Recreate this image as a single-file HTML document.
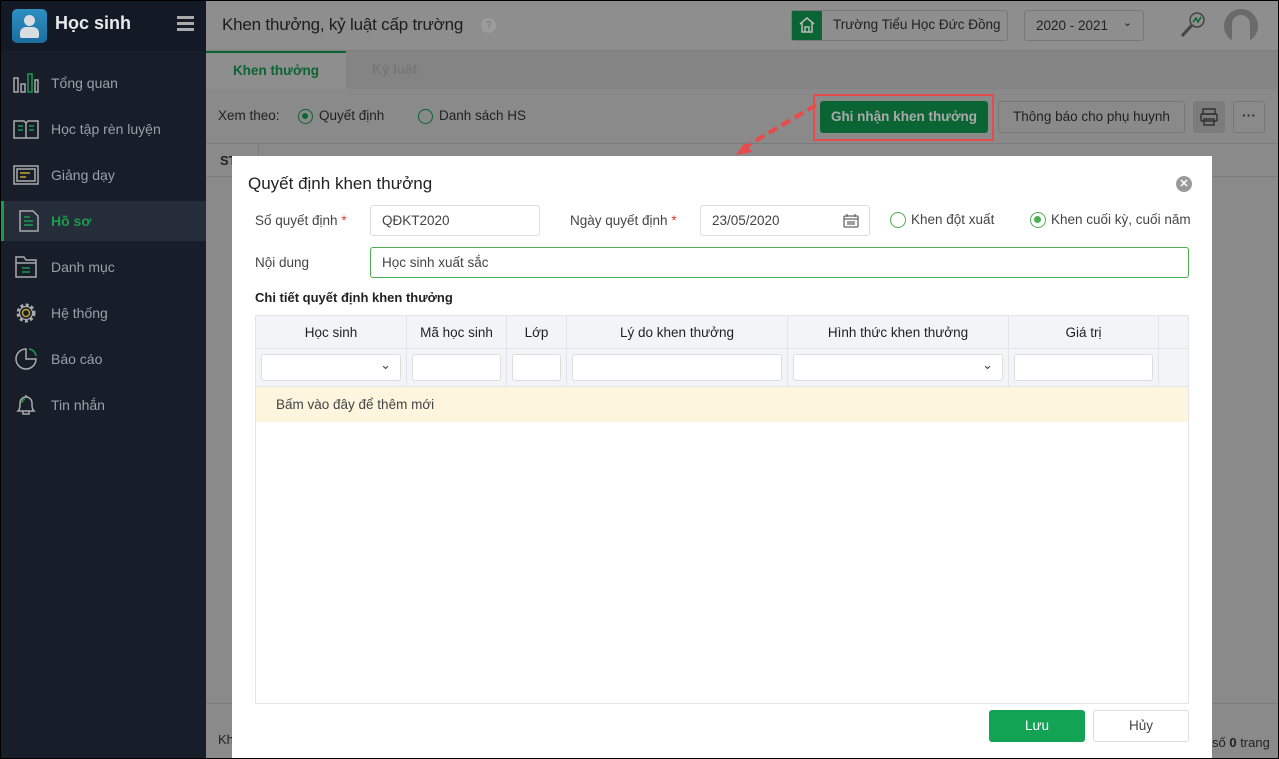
<!DOCTYPE html>
<html><head><meta charset="utf-8"><style>
*{box-sizing:border-box;margin:0;padding:0}
body{width:1279px;height:759px;overflow:hidden;font-family:"Liberation Sans",sans-serif;font-size:13px;color:#333;position:relative;background:#000}
.abs{position:absolute}
#side{left:1px;top:1px;width:205px;height:757px;background:#171e2a}
#main{left:206px;top:1px;width:1072px;height:757px;background:#8a8a8a}
.nav{position:absolute;left:0;width:205px;height:40px;color:#9aa0a8;font-size:14px;line-height:40px;padding-left:50px}
.ico{position:absolute;left:12px;top:9px;width:26px;height:22px}
.modal{left:232px;top:156px;width:980px;height:602px;background:#fff}
.lbl{position:absolute;font-size:13.5px;color:#444}
.inp{position:absolute;border:1px solid #ddd;border-radius:3px;background:#fff;font-size:13.5px;color:#444;padding-left:11px;line-height:29px}
.radio{position:absolute;width:16px;height:16px;border:1.5px solid #4caf50;border-radius:50%}
.th{position:absolute;top:0;height:33px;line-height:33px;text-align:center;font-size:13.5px;color:#222;border-right:1px solid #e3e5ea}
.fc{position:absolute;top:33px;height:38px;border-right:1px solid #e3e5ea}
.fi{position:absolute;top:5px;left:5px;right:5px;height:27px;border:1px solid #ddd;border-radius:3px;background:#fff}
</style></head><body>
<div id="side" class="abs">
 <div class="abs" style="left:0;top:0;width:205px;height:50px;background:#141a25"></div>
 <div class="abs" style="left:11px;top:8px;width:35px;height:34px;border-radius:5px;background:linear-gradient(#2e8fc0,#1a6ea0)">
  <div class="abs" style="left:12px;top:6px;width:11px;height:11px;border-radius:50%;background:#d8dde2"></div>
  <div class="abs" style="left:8px;top:18px;width:19px;height:11px;border-radius:6px 6px 2px 2px;background:#d8dde2"></div></div>
 <div class="abs" style="left:54px;top:12px;color:#e8eaec;font-size:18px;font-weight:bold">Học sinh</div>
 <div class="abs" style="left:176px;top:15px;width:17px;height:3px;background:#aaa;box-shadow:0 6px 0 #aaa,0 12px 0 #aaa"></div>
 <div class="nav" style="top:62px"><svg class="ico" viewBox="0 0 26 22"><g fill="none" stroke="#aaa" stroke-width="1.5"><rect x="1" y="6" width="4" height="14"/><rect x="8" y="12" width="4" height="8"/><rect x="15" y="2" width="4" height="18" stroke="#1e9a4e"/><rect x="22" y="8" width="3" height="12"/></g></svg>Tổng quan</div>
 <div class="nav" style="top:108px"><svg class="ico" viewBox="0 0 26 22"><g fill="none" stroke="#aaa" stroke-width="1.5"><path d="M1 3h10l2 2 2-2h10v17H1z"/><path d="M13 5v15"/><path d="M5 8h5M5 12h5M16 8h5M16 12h5" stroke="#1e9a4e"/></g></svg>Học tập rèn luyện</div>
 <div class="nav" style="top:154px"><svg class="ico" viewBox="0 0 26 22"><g fill="none" stroke="#aaa" stroke-width="1.5"><rect x="1" y="2" width="24" height="18"/><rect x="4" y="5" width="18" height="12"/><path d="M7 9h10M7 13h6" stroke="#c9a227"/></g></svg>Giảng dạy</div>
 <div class="nav" style="top:200px;background:#252d3a;color:#1e9a4e;font-weight:bold;border-left:3px solid #1e9a4e;padding-left:47px"><svg class="ico" viewBox="0 0 26 22" style="left:12px"><g fill="none" stroke="#aaa" stroke-width="1.5"><path d="M4 1h13l5 5v15H4z"/><path d="M8 7h6M8 11h9M8 15h9" stroke="#1e9a4e"/></g></svg>Hồ sơ</div>
 <div class="nav" style="top:246px"><svg class="ico" viewBox="0 0 26 22"><g fill="none" stroke="#aaa" stroke-width="1.5"><path d="M3 1h8l2 3h10v17H3z"/><path d="M3 7h20"/><path d="M9 12h8M9 16h8" stroke="#1e9a4e"/></g></svg>Danh mục</div>
 <div class="nav" style="top:292px"><svg class="ico" viewBox="0 0 26 22"><circle cx="13" cy="11" r="8" fill="none" stroke="#aaa" stroke-width="3" stroke-dasharray="3 2.3"/><circle cx="13" cy="11" r="6.5" fill="none" stroke="#aaa" stroke-width="1.2"/><circle cx="13" cy="11" r="3.5" fill="none" stroke="#c9a227" stroke-width="1.5"/></svg>Hệ thống</div>
 <div class="nav" style="top:338px"><svg class="ico" viewBox="0 0 26 22"><g fill="none" stroke-width="1.5"><path d="M13 1a10 10 0 1 0 10 10H13z" stroke="#aaa"/><path d="M16 1a8 8 0 0 1 7 7" stroke="#1e9a4e"/></g></svg>Báo cáo</div>
 <div class="nav" style="top:384px"><svg class="ico" viewBox="0 0 26 22"><g fill="none" stroke-width="1.5"><path d="M5 17c2-2 2-4 2-8a6 6 0 0 1 12 0c0 4 0 6 2 8zM13 1v2M10 17v3h6v-3" stroke="#aaa"/><path d="M9 9a4 4 0 0 1 3-4" stroke="#1e9a4e"/></g></svg>Tin nhắn</div>
</div>
<div id="main" class="abs">
 <div class="abs" style="left:0;top:0;width:1072px;height:50px;background:#8e8e8e;border-bottom:1px solid #7c7c7c"></div>
 <div class="abs" style="left:16px;top:14px;font-size:17px;color:#1d1d1d;letter-spacing:-0.2px">Khen thưởng, kỷ luật cấp trường</div>
 <div class="abs" style="left:275px;top:17px;width:15px;height:15px;border-radius:50%;background:#9c9c9c;color:#777;font-size:10px;text-align:center;line-height:15px">?</div>
 <div class="abs" style="left:585px;top:9px;width:217px;height:31px;border:1px solid #777;border-radius:3px;background:#8e8e8e"></div>
 <div class="abs" style="left:586px;top:10px;width:30px;height:29px;background:#0a6433"></div>
 <svg class="abs" style="left:592px;top:15px" width="18" height="18" viewBox="0 0 18 18"><path d="M2 8L9 2l7 6M4 7v9h10V7M7 16v-5h4v5" fill="none" stroke="#bbb" stroke-width="1.5"/></svg>
 <div class="abs" style="left:627px;top:16px;font-size:13.5px;color:#222">Trường Tiểu Học Đức Đồng</div>
 <div class="abs" style="left:818px;top:9px;width:120px;height:31px;border:1px solid #777;border-radius:3px;color:#222;font-size:13.5px;padding:7px 11px">2020 - 2021<span style="position:absolute;right:11px;top:5px;font-size:11px">⌄</span></div>
 <svg class="abs" style="left:973px;top:9px" width="28" height="30" viewBox="0 0 28 30"><circle cx="18" cy="10" r="7" fill="none" stroke="#444" stroke-width="1.5"/><path d="M13 15L3 26" stroke="#444" stroke-width="3"/><path d="M14 12l3-4 2 4 3-5" fill="none" stroke="#0a6433" stroke-width="1.5"/></svg>
 <div class="abs" style="left:1018px;top:8px;width:34px;height:34px;border-radius:50%;background:#6a6a6a"><div class="abs" style="left:8px;top:6px;width:18px;height:28px;border-radius:9px 9px 0 0;background:#8e8e8e"></div></div>
 <div class="abs" style="left:0;top:50px;width:1072px;height:38px;background:#848484"></div>
 <div class="abs" style="left:0;top:50px;width:140px;height:38px;background:#8e8e8e;border-top:2px solid #0a6433;color:#0a6433;font-weight:bold;font-size:13.5px;text-align:center;line-height:36px">Khen thưởng</div>
 <div class="abs" style="left:166px;top:61px;color:#777;font-weight:bold;font-size:13.5px">Kỷ luật</div>
 <div class="abs" style="left:12px;top:107px;color:#222;font-size:13.5px">Xem theo:</div>
 <div class="abs" style="left:92px;top:108px;width:15px;height:15px;border:1.5px solid #0a6433;border-radius:50%"><div class="abs" style="left:3px;top:3px;width:6px;height:6px;border-radius:50%;background:#0a6433"></div></div>
 <div class="abs" style="left:113px;top:107px;color:#222;font-size:13.5px">Quyết định</div>
 <div class="abs" style="left:212px;top:108px;width:15px;height:15px;border:1.5px solid #0a6433;border-radius:50%"></div>
 <div class="abs" style="left:233px;top:107px;color:#222;font-size:13.5px">Danh sách HS</div>
 <div class="abs" style="left:607px;top:93px;width:181px;height:47px;border:2px solid #e84b4b"></div>
 <div class="abs" style="left:614px;top:100px;width:168px;height:32px;background:#0a6433;border-radius:3px;color:#aaa;font-weight:bold;font-size:13.5px;text-align:center;line-height:32px">Ghi nhận khen thưởng</div>
 <div class="abs" style="left:792px;top:100px;width:187px;height:32px;border:1px solid #777;border-radius:3px;color:#222;font-size:13.5px;text-align:center;line-height:30px">Thông báo cho phụ huynh</div>
 <div class="abs" style="left:987px;top:100px;width:32px;height:32px;background:#7c7c7c;border-radius:3px"><svg width="32" height="32"><g fill="none" stroke="#333" stroke-width="1.5"><rect x="10" y="8" width="12" height="5"/><rect x="8" y="13" width="16" height="7" rx="1"/><rect x="11" y="18" width="10" height="6"/></g></svg></div>
 <div class="abs" style="left:1027px;top:100px;width:32px;height:32px;border:1px solid #777;border-radius:3px;text-align:center;line-height:26px;color:#333;font-size:14px;font-weight:bold">···</div>
 <svg class="abs" style="left:525px;top:100px" width="90" height="60"><path d="M85 4L14 46" stroke="#e84b4b" stroke-width="4" stroke-dasharray="10 5"/><path d="M5 54l16-3-7-10z" fill="#e84b4b"/></svg>
 <div class="abs" style="left:0;top:142px;width:1072px;height:34px;border-top:1px solid #7c7c7c;border-bottom:1px solid #7c7c7c"></div>
 <div class="abs" style="left:52px;top:142px;width:1px;height:34px;background:#7c7c7c"></div>
 <div class="abs" style="left:14px;top:152px;font-weight:bold;color:#222">ST</div>
 <div class="abs" style="left:0;top:702px;width:1072px;height:1px;background:#7c7c7c"></div>
 <div class="abs" style="left:12px;top:731px;color:#222">Kh</div>
 <div class="abs" style="left:1006px;top:734px;color:#222">số <b>0</b> trang</div>
</div>
<div class="modal abs">
 <div class="abs" style="left:16px;top:18px;font-size:17px;color:#222">Quyết định khen thưởng</div>
 <div class="abs" style="left:944px;top:20px;width:16px;height:16px;border-radius:50%;background:#9a9a9a;color:#fff;font-size:11px;text-align:center;line-height:16px;font-weight:bold">✕</div>
 <div class="lbl" style="left:23px;top:57px">Số quyết định <span style="color:#e53935">*</span></div>
 <div class="inp" style="left:138px;top:49px;width:170px;height:31px">QĐKT2020</div>
 <div class="lbl" style="left:338px;top:57px">Ngày quyết định <span style="color:#e53935">*</span></div>
 <div class="inp" style="left:468px;top:49px;width:170px;height:31px">23/05/2020
  <svg class="abs" style="right:10px;top:7px" width="16" height="15"><g fill="none" stroke="#666" stroke-width="1.3"><rect x="1" y="3" width="14" height="11" rx="1"/><path d="M1 6h14M4 1v3M12 1v3M4 9h8M4 11h8" /></g></svg></div>
 <div class="radio" style="left:658px;top:56px"></div>
 <div class="lbl" style="left:679px;top:56px">Khen đột xuất</div>
 <div class="radio" style="left:798px;top:56px"><div class="abs" style="left:3px;top:3px;width:7px;height:7px;border-radius:50%;background:#4caf50"></div></div>
 <div class="lbl" style="left:819px;top:56px">Khen cuối kỳ, cuối năm</div>
 <div class="lbl" style="left:23px;top:99px">Nội dung</div>
 <div class="inp" style="left:138px;top:91px;width:819px;height:31px;border-color:#4caf50">Học sinh xuất sắc</div>
 <div class="abs" style="left:23px;top:134px;font-weight:bold;font-size:13px;color:#222">Chi tiết quyết định khen thưởng</div>
 <div class="abs" style="left:23px;top:159px;width:934px;height:389px;border:1px solid #e3e5ea">
  <div class="abs" style="left:0;top:0;width:932px;height:71px;background:#f3f4f7;border-bottom:1px solid #e3e5ea"></div>
  <div class="abs" style="left:0;top:32px;width:932px;height:1px;background:#e3e5ea"></div>
  <div class="th" style="left:0;width:151px">Học sinh</div>
  <div class="th" style="left:151px;width:100px">Mã học sinh</div>
  <div class="th" style="left:251px;width:60px">Lớp</div>
  <div class="th" style="left:311px;width:221px">Lý do khen thưởng</div>
  <div class="th" style="left:532px;width:221px">Hình thức khen thưởng</div>
  <div class="th" style="left:753px;width:150px">Giá trị</div>
  <div class="fc" style="left:0;width:151px"><div class="fi"><span style="position:absolute;right:9px;top:2px;font-size:13px;color:#444">⌄</span></div></div>
  <div class="fc" style="left:151px;width:100px"><div class="fi"></div></div>
  <div class="fc" style="left:251px;width:60px"><div class="fi"></div></div>
  <div class="fc" style="left:311px;width:221px"><div class="fi"></div></div>
  <div class="fc" style="left:532px;width:221px"><div class="fi"><span style="position:absolute;right:9px;top:2px;font-size:13px;color:#444">⌄</span></div></div>
  <div class="fc" style="left:753px;width:150px"><div class="fi"></div></div>
  <div class="th" style="left:903px;width:29px;height:71px;border:0"></div>
  <div class="abs" style="left:0;top:71px;width:932px;height:35px;background:#fdf5de;line-height:35px;padding-left:20px;font-size:13.5px;color:#444">Bấm vào đây để thêm mới</div>
 </div>
 <div class="abs" style="left:757px;top:554px;width:96px;height:32px;background:#12a454;border-radius:3px;color:#fff;text-align:center;line-height:32px;font-size:13.5px">Lưu</div>
 <div class="abs" style="left:861px;top:554px;width:96px;height:32px;border:1px solid #ddd;border-radius:3px;color:#444;text-align:center;line-height:30px;font-size:13.5px">Hủy</div>
</div>
</body></html>
